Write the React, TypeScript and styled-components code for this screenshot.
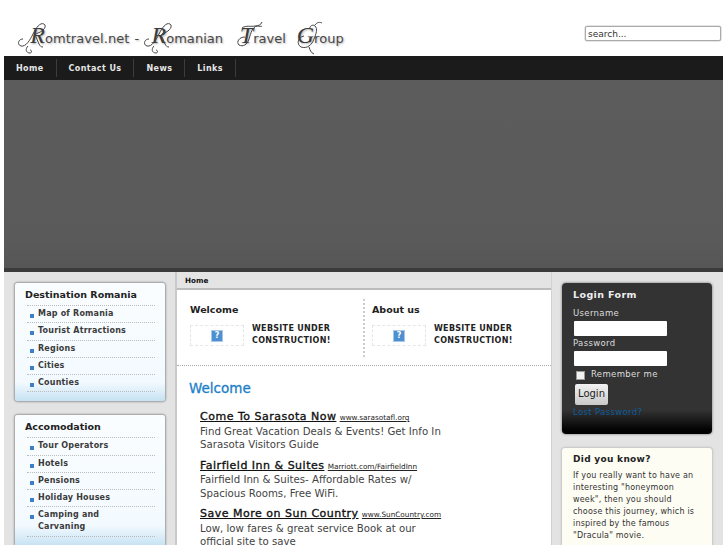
import React from "react";
import styled, { createGlobalStyle } from "styled-components";

const Global = createGlobalStyle`
  html, body { margin: 0; padding: 0; height: 545px; overflow: hidden; background: #fff; }
  body { font-family: "DejaVu Sans", sans-serif; color: #333; }
  * { box-sizing: border-box; }
`;

const Page = styled.div`width: 727px;`;
const Header = styled.header`
  height: 56px;
  display: flex;
  justify-content: space-between;
  padding: 17px 6px 0 17px;
`;
const Logo = styled.div`
  display: flex;
  align-items: baseline;
  height: 38px;
  white-space: nowrap;
  color: #484848;
  font-size: 13px;
  letter-spacing: .05px;
  line-height: 36px;
  text-shadow: 1px 1px 2px rgba(0,0,0,.3);
`;
const Cap = styled.span<{ $w: number }>`
  position: relative;
  display: inline-block;
  width: ${p => p.$w}px;
  font-family: "Liberation Serif", serif;
  font-style: italic;
  font-size: 24px;
  text-align: right;
  color: #3c3c3c;
`;
const Swirl = styled.svg`
  position: absolute;
  left: 0;
  top: 2px;
  width: 32px;
  height: 36px;
  fill: none;
  stroke: #444;
  stroke-width: 1;
`;
const Dash = styled.span`margin: 0 4px 0 5px;`;
const Gap = styled.span<{ $w: number }>`display: inline-block; width: ${p => p.$w}px;`;
const Search = styled.input`
  width: 136px;
  height: 15px;
  margin-top: 9px;
  padding: 0 2px;
  border: 1px solid #aaa;
  box-shadow: 0 0 0 .5px #ccc;
  border-radius: 2px;
  font: 9px "DejaVu Sans", sans-serif;
  color: #333;
  &::placeholder { color: #333; opacity: 1; }
`;
const Nav = styled.nav`
  height: 24px;
  margin: 0 4px;
  display: flex;
  background: #1b1b1b;
  align-items: stretch;
`;
const NavItem = styled.a`
  display: flex;
  align-items: center;
  padding: 0 12px;
  margin: 3px 0;
  font-size: 8px;
  font-weight: 700;
  letter-spacing: .4px;
  color: #e6e6e6;
  border-right: 1px solid #3c3c3c;
`;
const Banner = styled.div`
  height: 192px;
  margin: 0 4px;
  background: linear-gradient(#5c5c5c, #5a5a5a 85%, #565656);
  border-bottom: 4px solid #3b3b3b;
`;
const Columns = styled.div`
  margin: 0 4px;
  display: grid;
  grid-template-columns: 171px 377px 171px;
  background: #e3e3e3;
  height: 273px;
`;
const Side = styled.aside<{ $left?: boolean }>`
  padding: 11px 0 0 ${p => (p.$left ? 11 : 10)}px;
  display: flex;
  flex-direction: column;
  gap: 14px;
`;
const Module = styled.section`
  width: 150px;
  padding: 5px 10px 9px;
  border-radius: 3px;
  background: linear-gradient(#fafdff, #f3faff 84%, #c6e2f3);
  box-shadow: 0 0 2px 1px #9a9a9a;
`;
const ModuleTitle = styled.h3`
  margin: 0;
  height: 17px;
  font-size: 9.5px;
  line-height: 13px;
  font-weight: 700;
  color: #222;
`;
const MenuList = styled.ul`
  list-style: none;
  margin: 0 0 0 2px;
  padding: 0;
  border-top: 1px dotted #bbb;
`;
const MenuItem = styled.li`
  position: relative;
  padding: 2px 20px 2.25px 11px;
  font-size: 8px;
  line-height: 12px;
  font-weight: 700;
  letter-spacing: .2px;
  color: #3b3b3b;
  border-bottom: 1px dotted #bbb;
  &::before {
    content: "";
    position: absolute;
    left: 3px;
    top: 8px;
    width: 4px;
    height: 4px;
    background: #3d7fc4;
  }
`;
const Center = styled.main`
  border-left: 2px solid #c9c9c9;
  border-right: 1px solid #d2d2d2;
  background: #fff;
`;
const Crumb = styled.div`
  height: 18px;
  padding: 4px 0 0 8px;
  background: #e4e4e4;
  border-bottom: 2px solid #bcbcbc;
  font-size: 7.2px;
  line-height: 10px;
  font-weight: 700;
  color: #111;
`;
const Tops = styled.div`
  height: 76px;
  padding-top: 9px;
  display: grid;
  grid-template-columns: 186px 1fr;
  border-bottom: 1px dotted #aaa;
`;
const TopCol = styled.div<{ $div?: boolean }>`
  height: 58px;
  padding: 4px 0 0 ${p => (p.$div ? 7 : 13)}px;
  ${p => (p.$div ? "border-left: 2px dotted #ccc;" : "")}
`;
const TopTitle = styled.h4`
  margin: 0 0 9px;
  font-size: 9.5px;
  line-height: 13px;
  font-weight: 700;
  color: #222;
`;
const TopRow = styled.div`
  display: flex;
  gap: 8px;
`;
const Thumb = styled.div`
  width: 54px;
  height: 21px;
  border: 1px dashed #e6e6e6;
  display: flex;
  align-items: center;
  justify-content: center;
`;
const Qm = styled.span`
  width: 12px;
  height: 12px;
  background: #4d8fd1;
  border: 1px solid #a8c8e8;
  color: #fff;
  font-size: 8px;
  line-height: 10px;
  font-weight: 700;
  text-align: center;
`;
const Under = styled.div`
  font-size: 8px;
  line-height: 12px;
  font-weight: 700;
  letter-spacing: .3px;
  color: #222;
  white-space: pre-line;
  margin-top: -2px;
`;
const Body = styled.div`padding: 13px 0 0 12px;`;
const H1 = styled.h2`
  margin: 0 0 13px;
  font-size: 13.5px;
  line-height: 18px;
  font-weight: 400;
  -webkit-text-stroke: .3px #1b80c8;
  color: #1b80c8;
`;
const Ads = styled.div`
  padding-left: 11px;
  width: 259px;
`;
const Ad = styled.div`
  margin-bottom: 7px;
  font-size: 10.2px;
  line-height: 13.5px;
  color: #444;
`;
const AdTitle = styled.a`
  font-size: 11px;
  font-weight: 400;
  -webkit-text-stroke: .35px #111;
  letter-spacing: .5px;
  color: #111;
  text-decoration: underline;
`;
const AdUrl = styled.a`
  font-size: 7.3px;
  color: #222;
  text-decoration: underline;
`;
const Login = styled.section`
  width: 150px;
  height: 151px;
  padding: 5px 11px 0;
  border-radius: 4px;
  background: linear-gradient(#333, #333 84%, #000 98%);
  box-shadow: 0 0 2px 1px #aaa;
  color: #ddd;
  font-size: 8.5px;
  letter-spacing: .35px;
`;
const LoginTitle = styled.h3`
  margin: 0 0 6px;
  font-size: 9.5px;
  line-height: 13px;
  font-weight: 700;
  letter-spacing: .4px;
  color: #eee;
`;
const Label = styled.div`line-height: 12px; height: 12px; margin-bottom: 2px;`;
const TextBox = styled.div`
  width: 93px;
  height: 15px;
  margin: 0 0 1px 1px;
  background: #fff;
  border-radius: 1px;
`;
const Remember = styled.div`
  display: flex;
  align-items: center;
  gap: 6px;
  margin: 1px 0 3px 3px;
  height: 14px;
`;
const Check = styled.span`
  width: 9px;
  height: 9px;
  margin-top: 2px;
  background: #f2f2f2;
  border: 1px solid #999;
`;
const LoginBtn = styled.div`
  width: 33px;
  height: 21px;
  margin: 0 0 1px 2px;
  background: linear-gradient(#f2f2f2, #c9c9c9);
  border-radius: 2px;
  color: #222;
  font-size: 10px;
  letter-spacing: 0;
  line-height: 20px;
  text-align: center;
`;
const Lost = styled.a`color: #0d5c9c; display: block; line-height: 12px;`;
const Know = styled.section`
  width: 150px;
  height: 120px;
  padding: 5px 11px 0;
  border-radius: 3px 3px 0 0;
  background: #fdfdf4;
  box-shadow: 0 0 2px 1px #c4c4c4;
`;
const KnowTitle = styled.h3`
  margin: 0 0 4px;
  font-size: 9px;
  line-height: 13px;
  font-weight: 700;
  letter-spacing: .3px;
  color: #222;
`;
const KnowText = styled.p`
  margin: 0;
  font-size: 8px;
  line-height: 12.1px;
  letter-spacing: .2px;
  color: #333;
`;

const flourishes: Record<string, string> = {
  R: "M6 20c-5 0-6 6-2 7 5 1 9-6 12-12 3-6 7-12 11-10 3 2 0 7-6 9-3 1-3 2-2 4l3 7c1 2 2 3 4 3M11 27c-3 3-2 7 2 7 2 0 2-3 0-3",
  T: "M10 18c-6 0-9 5-6 8 4 2 8 0 10-6 2-6 3-12 8-13 3 0 4 1 5 0M7 9c4-3 9-1 13-2 3 0 6-1 7-4",
  G: "M9 17c-6 1-8 8-3 11 6 2 11-2 13-8 2-5 4-10 1-13-2-2-6 0-5 3M20 6c2-3 5-3 7-2M14 28c1 3 2 6 5 7",
};

const L = ({ c, w }: { c: string; w: number }) => (
  <Cap $w={w}>
    <Swirl viewBox="0 0 32 36"><path d={flourishes[c]} /></Swirl>
    {c}
  </Cap>
);

const dest = ["Map of Romania", "Tourist Atrractions", "Regions", "Cities", "Counties"];
const acc = ["Tour Operators", "Hotels", "Pensions", "Holiday Houses", "Camping and Carvaning"];
const ads = [
  ["Come To Sarasota Now", "www.sarasotafl.org", "Find Great Vacation Deals & Events! Get Info In Sarasota Visitors Guide"],
  ["Fairfield Inn & Suites", "Marriott.com/FairfieldInn", "Fairfield Inn & Suites- Affordable Rates w/ Spacious Rooms, Free WiFi."],
  ["Save More on Sun Country", "www.SunCountry.com", "Low, low fares & great service Book at our official site to save"],
];
const uc = "WEBSITE UNDER\nCONSTRUCTION!";

export default function App() {
  return (
    <Page>
      <Global />
      <Header>
        <Logo>
          <L c="R" w={28} />omtravel.net<Dash>-</Dash>
          <L c="R" w={23} />omanian<Gap $w={12} />
          <L c="T" w={18} />ravel<Gap $w={9} />
          <L c="G" w={19} />roup
        </Logo>
        <Search placeholder="search..." />
      </Header>
      <Nav>
        {["Home", "Contact Us", "News", "Links"].map(n => <NavItem key={n}>{n}</NavItem>)}
      </Nav>
      <Banner />
      <Columns>
        <Side $left>
          <Module>
            <ModuleTitle>Destination Romania</ModuleTitle>
            <MenuList>{dest.map(d => <MenuItem key={d}>{d}</MenuItem>)}</MenuList>
          </Module>
          <Module>
            <ModuleTitle>Accomodation</ModuleTitle>
            <MenuList>{acc.map(d => <MenuItem key={d}>{d}</MenuItem>)}</MenuList>
          </Module>
        </Side>
        <Center>
          <Crumb>Home</Crumb>
          <Tops>
            <TopCol>
              <TopTitle>Welcome</TopTitle>
              <TopRow><Thumb><Qm>?</Qm></Thumb><Under>{uc}</Under></TopRow>
            </TopCol>
            <TopCol $div>
              <TopTitle>About us</TopTitle>
              <TopRow><Thumb><Qm>?</Qm></Thumb><Under>{uc}</Under></TopRow>
            </TopCol>
          </Tops>
          <Body>
            <H1>Welcome</H1>
            <Ads>
              {ads.map(a => (
                <Ad key={a[0]}>
                  <AdTitle>{a[0]}</AdTitle> <AdUrl>{a[1]}</AdUrl><br />{a[2]}
                </Ad>
              ))}
            </Ads>
          </Body>
        </Center>
        <Side>
          <Login>
            <LoginTitle>Login Form</LoginTitle>
            <Label>Username</Label>
            <TextBox />
            <Label>Password</Label>
            <TextBox />
            <Remember><Check />Remember me</Remember>
            <LoginBtn>Login</LoginBtn>
            <Lost>Lost Password?</Lost>
          </Login>
          <Know>
            <KnowTitle>Did you know?</KnowTitle>
            <KnowText>If you really want to have an interesting "honeymoon week", then you should choose this journey, which is inspired by the famous "Dracula" movie.</KnowText>
          </Know>
        </Side>
      </Columns>
    </Page>
  );
}
